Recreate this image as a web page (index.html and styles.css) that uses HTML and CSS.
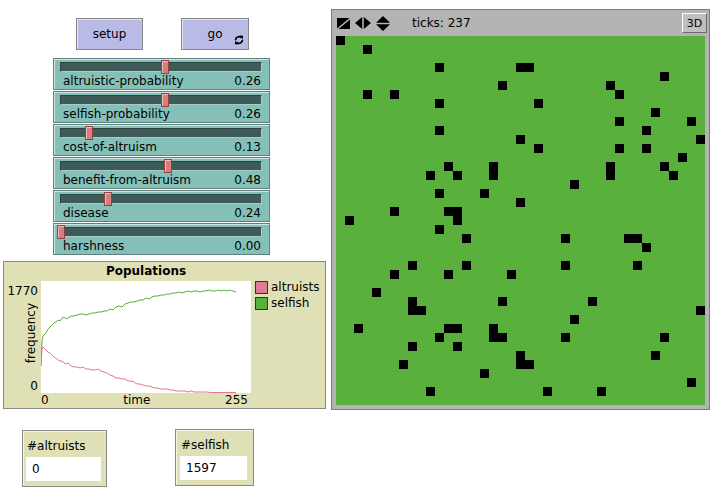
FILE: index.html
```html
<!DOCTYPE html>
<html>
<head>
<meta charset="utf-8">
<title>Altruism</title>
<link rel="stylesheet" href="styles.css">
</head>
<body>
<div class="app">
  <div class="left">
    <div class="buttons">
      <div class="btn btn-setup">setup</div>
      <div class="btn btn-go">go
        <svg class="forever" width="10" height="10" viewBox="0 0 10 10">
          <path d="M1.6 5.2 A3.3 3.3 0 0 1 7.2 2.6" fill="none" stroke="#000" stroke-width="1.7"/>
          <path d="M5.6 0.6 L9.2 0.8 L8.6 4.4 Z" fill="#000"/>
          <path d="M8.4 4.8 A3.3 3.3 0 0 1 2.8 7.4" fill="none" stroke="#000" stroke-width="1.7"/>
          <path d="M4.4 9.4 L0.8 9.2 L1.4 5.6 Z" fill="#000"/>
        </svg>
      </div>
    </div>

    <div class="sliders">
      <div class="slider">
        <div class="track"></div>
        <div class="handle" style="left:107px"></div>
        <div class="srow"><span>altruistic-probability</span><span>0.26</span></div>
      </div>
      <div class="slider">
        <div class="track"></div>
        <div class="handle" style="left:107px"></div>
        <div class="srow"><span>selfish-probability</span><span>0.26</span></div>
      </div>
      <div class="slider">
        <div class="track"></div>
        <div class="handle" style="left:31px"></div>
        <div class="srow"><span>cost-of-altruism</span><span>0.13</span></div>
      </div>
      <div class="slider">
        <div class="track"></div>
        <div class="handle" style="left:110px"></div>
        <div class="srow"><span>benefit-from-altruism</span><span>0.48</span></div>
      </div>
      <div class="slider">
        <div class="track"></div>
        <div class="handle" style="left:50px"></div>
        <div class="srow"><span>disease</span><span>0.24</span></div>
      </div>
      <div class="slider">
        <div class="track"></div>
        <div class="handle" style="left:3px"></div>
        <div class="srow"><span>harshness</span><span>0.00</span></div>
      </div>
    </div>

    <div class="plot">
      <div class="plot-title">Populations</div>
      <div class="yaxis">
        <span>1770</span>
        <span>0</span>
        <span class="ylabel">frequency</span>
      </div>
      <div class="plot-area">
        <svg width="210" height="112" viewBox="0 0 210 112">
          <polyline class="line-green" points="0,85 1,60 2,55 3,54 5,52 7,48 9,46 11,44 13,42 15,41 17,39 19,40 21,37 23,36 25,38 27,37 30,35 33,35 36,34 39,33 42,33 45,34 48,33 51,32 54,32 57,31 60,31 63,30 66,30 69,28 72,29 75,26 78,25 81,26 84,23 87,22 90,21 93,21 96,20 99,19 102,19 105,17 108,18 111,16 114,15 117,15 120,14 123,14 126,13 129,13 132,12 135,12 138,11 141,12 144,11 147,10 150,11 153,10 156,10 159,11 162,10 165,10 168,9 171,10 174,10 177,9 180,10 183,9 186,10 189,9 192,10 195,11"/>
          <polyline class="line-pink" points="0,85 1,66 3,67 5,69 7,71 9,72 11,74 13,76 15,77 17,79 19,80 21,80 23,82 25,83 27,82 30,85 33,86 36,86 39,87 42,86 45,88 48,88 51,89 54,89 57,88 60,90 63,91 66,92 69,94 72,95 75,97 78,97 81,98 84,98 87,100 90,100 93,101 96,103 99,103 102,104 105,105 108,105 111,106 114,107 117,107 120,108 123,108 126,108 129,109 132,109 135,110 138,110 141,110 144,110 147,111 150,110 153,111 156,111 159,111 165,111 170,111.5 180,111.5 195,111.5"/>
        </svg>
      </div>
      <div class="legend">
        <div class="legend-item"><span class="swatch swatch-pink"></span>altruists</div>
        <div class="legend-item"><span class="swatch swatch-green"></span>selfish</div>
      </div>
      <div class="xaxis"><span>0</span><span>time</span><span>255</span></div>
    </div>

    <div class="monitors">
      <div class="monitor mon-altruists">
        <div class="mon-label">#altruists</div>
        <div class="mon-value">0</div>
      </div>
      <div class="monitor mon-selfish">
        <div class="mon-label">#selfish</div>
        <div class="mon-value">1597</div>
      </div>
    </div>
  </div>

  <div class="view">
    <div class="view-bar">
      <svg class="vicon" width="13" height="11" viewBox="0 0 13 11">
        <path d="M0 0H12.5L0 10.5Z M13 1.5V11H1.5Z" fill="#000"/>
      </svg>
      <svg class="vicon" width="16" height="12" viewBox="0 0 16 12">
        <path d="M0 6L7.2 0V12Z M16 6L8.8 0V12Z" fill="#000"/>
      </svg>
      <svg class="vicon" width="14" height="15" viewBox="0 0 14 15">
        <path d="M7 0L14 6.7H0Z M7 15L14 8.3H0Z" fill="#000"/>
      </svg>
      <span class="ticks">ticks: 237</span>
      <div class="btn3d">3D</div>
    </div>
    <svg class="world" width="369" height="369" viewBox="0 0 369 369">
      <rect width="369" height="369" fill="#59b03c"/>
      <g fill="#000">
        <rect x="0" y="0" width="9" height="9"/>
        <rect x="27" y="9" width="9" height="9"/>
        <rect x="99" y="27" width="9" height="9"/>
        <rect x="180" y="27" width="9" height="9"/>
        <rect x="189" y="27" width="9" height="9"/>
        <rect x="324" y="36" width="9" height="9"/>
        <rect x="162" y="45" width="9" height="9"/>
        <rect x="270" y="45" width="9" height="9"/>
        <rect x="27" y="54" width="9" height="9"/>
        <rect x="54" y="54" width="9" height="9"/>
        <rect x="279" y="54" width="9" height="9"/>
        <rect x="99" y="63" width="9" height="9"/>
        <rect x="198" y="63" width="9" height="9"/>
        <rect x="315" y="72" width="9" height="9"/>
        <rect x="279" y="81" width="9" height="9"/>
        <rect x="351" y="81" width="9" height="9"/>
        <rect x="99" y="90" width="9" height="9"/>
        <rect x="306" y="90" width="9" height="9"/>
        <rect x="180" y="99" width="9" height="9"/>
        <rect x="360" y="99" width="9" height="9"/>
        <rect x="198" y="108" width="9" height="9"/>
        <rect x="279" y="108" width="9" height="9"/>
        <rect x="306" y="108" width="9" height="9"/>
        <rect x="342" y="117" width="9" height="9"/>
        <rect x="108" y="126" width="9" height="9"/>
        <rect x="153" y="126" width="9" height="9"/>
        <rect x="270" y="126" width="9" height="9"/>
        <rect x="324" y="126" width="9" height="9"/>
        <rect x="90" y="135" width="9" height="9"/>
        <rect x="117" y="135" width="9" height="9"/>
        <rect x="153" y="135" width="9" height="9"/>
        <rect x="270" y="135" width="9" height="9"/>
        <rect x="333" y="135" width="9" height="9"/>
        <rect x="234" y="144" width="9" height="9"/>
        <rect x="99" y="153" width="9" height="9"/>
        <rect x="144" y="153" width="9" height="9"/>
        <rect x="180" y="162" width="9" height="9"/>
        <rect x="54" y="171" width="9" height="9"/>
        <rect x="108" y="171" width="9" height="9"/>
        <rect x="117" y="171" width="9" height="9"/>
        <rect x="9" y="180" width="9" height="9"/>
        <rect x="117" y="180" width="9" height="9"/>
        <rect x="99" y="189" width="9" height="9"/>
        <rect x="126" y="198" width="9" height="9"/>
        <rect x="225" y="198" width="9" height="9"/>
        <rect x="288" y="198" width="9" height="9"/>
        <rect x="297" y="198" width="9" height="9"/>
        <rect x="306" y="207" width="9" height="9"/>
        <rect x="72" y="225" width="9" height="9"/>
        <rect x="126" y="225" width="9" height="9"/>
        <rect x="225" y="225" width="9" height="9"/>
        <rect x="297" y="225" width="9" height="9"/>
        <rect x="54" y="234" width="9" height="9"/>
        <rect x="108" y="234" width="9" height="9"/>
        <rect x="171" y="234" width="9" height="9"/>
        <rect x="36" y="252" width="9" height="9"/>
        <rect x="72" y="261" width="9" height="9"/>
        <rect x="162" y="261" width="9" height="9"/>
        <rect x="252" y="261" width="9" height="9"/>
        <rect x="72" y="270" width="9" height="9"/>
        <rect x="81" y="270" width="9" height="9"/>
        <rect x="360" y="270" width="9" height="9"/>
        <rect x="234" y="279" width="9" height="9"/>
        <rect x="18" y="288" width="9" height="9"/>
        <rect x="108" y="288" width="9" height="9"/>
        <rect x="117" y="288" width="9" height="9"/>
        <rect x="153" y="288" width="9" height="9"/>
        <rect x="99" y="297" width="9" height="9"/>
        <rect x="153" y="297" width="9" height="9"/>
        <rect x="162" y="297" width="9" height="9"/>
        <rect x="225" y="297" width="9" height="9"/>
        <rect x="324" y="297" width="9" height="9"/>
        <rect x="72" y="306" width="9" height="9"/>
        <rect x="117" y="306" width="9" height="9"/>
        <rect x="180" y="315" width="9" height="9"/>
        <rect x="315" y="315" width="9" height="9"/>
        <rect x="63" y="324" width="9" height="9"/>
        <rect x="180" y="324" width="9" height="9"/>
        <rect x="189" y="324" width="9" height="9"/>
        <rect x="144" y="333" width="9" height="9"/>
        <rect x="351" y="342" width="9" height="9"/>
        <rect x="90" y="351" width="9" height="9"/>
        <rect x="207" y="351" width="9" height="9"/>
        <rect x="261" y="351" width="9" height="9"/>
      </g>
    </svg>
  </div>
</div>
</body>
</html>
```

FILE: styles.css
```css
html, body {
  margin: 0;
  padding: 0;
  background: #ffffff;
}

body {
  font-family: "DejaVu Sans", "Noto Sans", sans-serif;
  font-size: 12px;
  color: #000;
  width: 718px;
  height: 504px;
  overflow: hidden;
}

.app {
  display: flex;
  align-items: flex-start;
}

.left {
  width: 331px;
  flex: none;
}

/* Buttons */
.buttons {
  display: flex;
  padding-top: 18px;
  padding-left: 76px;
  gap: 38px;
}

.btn {
  position: relative;
  box-sizing: border-box;
  height: 32px;
  background: #babae6;
  border: 1px solid #858585;
  box-shadow: inset 1px 1px 0 #e4e4f6;
  display: flex;
  align-items: center;
  justify-content: center;
  font-size: 12px;
}

.btn-setup {
  width: 67px;
}

.btn-go {
  width: 68px;
}

.forever {
  position: absolute;
  right: 4px;
  bottom: 4px;
}

/* Sliders */
.sliders {
  margin-top: 8px;
  margin-left: 53px;
  display: flex;
  flex-direction: column;
  gap: 1px;
}

.slider {
  position: relative;
  box-sizing: border-box;
  width: 217px;
  height: 32px;
  background: #85c0b8;
  border: 1px solid #61807c;
  box-shadow: inset 1px 1px 0 #cfe8e4;
}

.track {
  box-sizing: border-box;
  margin-left: 6px;
  margin-top: 3px;
  width: 202px;
  height: 10px;
  background: #3e5b57;
  border: 1px solid #2d4440;
  border-bottom-color: #a6ccc7;
  border-right-color: #a6ccc7;
}

.handle {
  position: absolute;
  top: 1px;
  box-sizing: border-box;
  width: 8px;
  height: 14px;
  background: #d97c7c;
  border: 1px solid #8e4444;
  box-shadow: inset 1px 1px 0 #f4b9b9;
}

.srow {
  display: flex;
  justify-content: space-between;
  margin-top: 2px;
  padding: 0 8px 0 9px;
  line-height: 15px;
}

/* Plot */
.plot {
  margin-top: 6px;
  margin-left: 3px;
  box-sizing: border-box;
  width: 323px;
  height: 148px;
  background: #e0e0b7;
  border: 1px solid #8a8a8a;
  display: grid;
  grid-template-columns: 37px 210px 1fr;
  grid-template-rows: 19px 112px 15px;
}

.plot-title {
  grid-column: 2;
  grid-row: 1;
  text-align: center;
  font-weight: bold;
  line-height: 19px;
}

.yaxis {
  grid-column: 1;
  grid-row: 2;
  position: relative;
  display: flex;
  flex-direction: column;
  justify-content: space-between;
  align-items: flex-end;
  padding: 3px 3px 0 0;
  line-height: 14px;
}

.ylabel {
  position: absolute;
  right: 3px;
  top: 22px;
  writing-mode: vertical-rl;
  transform: rotate(180deg);
  line-height: 14px;
}

.plot-area {
  grid-column: 2;
  grid-row: 2;
  background: #ffffff;
}

.plot-area svg {
  display: block;
}

.line-green {
  fill: none;
  stroke: #59b03c;
  stroke-width: 1;
}

.line-pink {
  fill: none;
  stroke: #e2778e;
  stroke-width: 1;
}

.legend {
  grid-column: 3;
  grid-row: 2;
  padding-left: 4px;
  display: flex;
  flex-direction: column;
  gap: 3px;
}

.legend-item {
  display: flex;
  align-items: center;
  height: 13px;
  line-height: 13px;
  gap: 3px;
}

.swatch {
  box-sizing: border-box;
  width: 13px;
  height: 13px;
  border: 1px solid #333;
}

.swatch-pink {
  background: #e07b91;
}

.swatch-green {
  background: #59b03c;
}

.xaxis {
  grid-column: 2;
  grid-row: 3;
  display: flex;
  justify-content: space-between;
  padding-right: 3px;
  line-height: 15px;
}

/* Monitors */
.monitors {
  display: flex;
  align-items: flex-start;
  margin-top: 20px;
}

.monitor {
  box-sizing: border-box;
  background: #e0e0b7;
  border: 1px solid #8a8a8a;
  box-shadow: inset 1px 1px 0 #f4f4e4;
}

.mon-altruists {
  margin-left: 22px;
  margin-top: 1px;
  width: 85px;
  height: 57px;
}

.mon-selfish {
  margin-left: 68px;
  width: 79px;
  height: 57px;
}

.mon-label {
  padding-top: 8px;
  line-height: 15px;
  font-size: 12px;
}

.mon-altruists .mon-label {
  padding-left: 4px;
}

.mon-selfish .mon-label {
  padding-left: 5px;
}

.mon-value {
  background: #ffffff;
  margin-top: 3px;
  height: 24px;
  line-height: 24px;
  padding-left: 6px;
  box-sizing: border-box;
}

.mon-altruists .mon-value {
  margin-left: 3px;
  width: 75px;
}

.mon-selfish .mon-value {
  margin-left: 4px;
  width: 67px;
}

/* World view */
.view {
  margin-top: 9px;
  box-sizing: border-box;
  width: 379px;
  height: 401px;
  background: #b4b4b4;
  border: 1px solid #7c7c7c;
  padding: 0 4px 4px 4px;
  flex: none;
}

.view-bar {
  height: 26px;
  display: flex;
  align-items: center;
  padding-left: 1px;
}

.vicon {
  display: block;
  margin-right: 5px;
}

.ticks {
  margin-left: 17px;
  font-size: 12px;
}

.btn3d {
  margin-left: auto;
  margin-right: -2px;
  box-sizing: border-box;
  width: 25px;
  height: 20px;
  background: #c0c0c0;
  border: 1px solid;
  border-color: #ffffff #6a6a6a #6a6a6a #ffffff;
  font-size: 11px;
  display: flex;
  align-items: center;
  justify-content: center;
}

.world {
  display: block;
}
```
